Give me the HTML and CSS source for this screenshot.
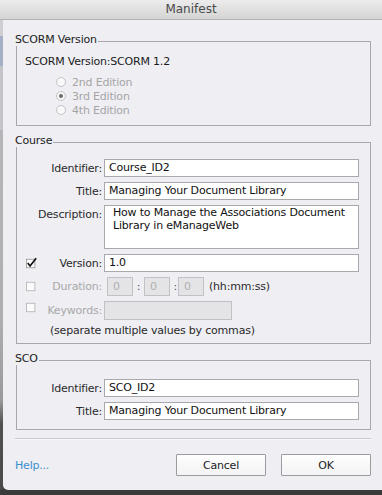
FILE: index.html
```html
<!DOCTYPE html>
<html>
<head>
<meta charset="utf-8">
<title>Manifest</title>
<link rel="stylesheet" href="styles.css">
</head>
<body>
<div class="window">
  <div class="titlebar">Manifest</div>
  <div class="main">
    <div class="strip"></div>
    <div class="dialog">
      <section class="group">
        <div class="group-head"><span class="group-title">SCORM Version</span><span class="group-rule"></span></div>
        <div class="group-body scorm-body">
          <div class="scorm-line">SCORM Version:SCORM 1.2</div>
          <div class="radios">
            <div class="radio-row"><span class="radio"></span>2nd Edition</div>
            <div class="radio-row"><span class="radio on"></span>3rd Edition</div>
            <div class="radio-row"><span class="radio"></span>4th Edition</div>
          </div>
        </div>
      </section>

      <section class="group gap">
        <div class="group-head"><span class="group-title">Course</span><span class="group-rule"></span></div>
        <div class="group-body course-body">
          <label class="lbl wide">Identifier:</label>
          <div class="field">Course_ID2</div>

          <label class="lbl wide">Title:</label>
          <div class="field">Managing Your Document Library</div>

          <label class="lbl wide top">Description:</label>
          <div class="field area">How to Manage the Associations Document Library in eManageWeb</div>

          <span class="check checked"><svg width="13" height="13" viewBox="0 0 13 13"><rect x="0.5" y="1.5" width="10" height="10" fill="#fbfbfb" stroke="#9a9a9a"/><path d="M2 6 L4.8 9.4 L12 0.4" fill="none" stroke="#111" stroke-width="2"/></svg></span>
          <label class="lbl">Version:</label>
          <div class="field">1.0</div>

          <span class="check"><svg width="13" height="13" viewBox="0 0 13 13"><rect x="0.5" y="1.5" width="10" height="10" fill="#fbfbfb" stroke="#b4b4b8"/></svg></span>
          <label class="lbl dim">Duration:</label>
          <div class="duration">
            <span class="mini">0</span><span class="colon c1">:</span><span class="mini">0</span><span class="colon c2">:</span><span class="mini">0</span><span class="fmt">(hh:mm:ss)</span>
          </div>

          <span class="check kw"><svg width="13" height="13" viewBox="0 0 13 13"><rect x="0.5" y="1.5" width="10" height="10" fill="#fbfbfb" stroke="#b4b4b8"/></svg></span>
          <label class="lbl dim">Keywords:</label>
          <div class="kwrow"><span class="field disabled kwfield"></span></div>

          <div class="hint">(separate multiple values by commas)</div>
        </div>
      </section>

      <section class="group gap">
        <div class="group-head"><span class="group-title">SCO</span><span class="group-rule"></span></div>
        <div class="group-body sco-body">
          <label class="lbl wide">Identifier:</label>
          <div class="field">SCO_ID2</div>

          <label class="lbl wide">Title:</label>
          <div class="field">Managing Your Document Library</div>
        </div>
      </section>

      <div class="separator"></div>

      <div class="footer">
        <a class="help">Help...</a>
        <div class="buttons">
          <button class="btn">Cancel</button>
          <button class="btn">OK</button>
        </div>
      </div>
    </div>
  </div>
</div>
</body>
</html>
```

FILE: styles.css
```css
* { box-sizing: border-box; }

html, body {
  margin: 0;
  padding: 0;
}

body {
  font-family: "DejaVu Sans", "Liberation Sans", sans-serif;
  font-size: 11px;
  letter-spacing: -0.2px;
  color: #222;
  background: #3a3a3a;
}

.window {
  width: 382px;
  height: 495px;
  background: #3a3a3a;
  overflow: hidden;
}

.titlebar {
  height: 20px;
  line-height: 19px;
  text-align: center;
  font-size: 12px;
  letter-spacing: 0;
  color: #4a4a4a;
  background: linear-gradient(#ececec, #d4d4d4);
  border-bottom: 1px solid #b2b2b2;
}

.main {
  display: flex;
  height: 470px;
}

.strip {
  width: 3px;
  background: linear-gradient(to bottom,
    #cfcfd3 0, #cfcfd3 16px,
    #a4aec4 16px, #a4aec4 46px,
    #c4c4c8 46px, #c4c4c8 110px,
    #b6b6b8 110px, #aeaeb0 300px,
    #9a9a9c 380px, #505050 404px, #4a4a4a 470px);
}

.dialog {
  flex: 1;
  background: #eeeef3;
  border-bottom-left-radius: 5px;
  padding: 14px 11px 0 12px;
}

/* group boxes */
.group.gap { margin-top: 9px; }

.group-head {
  display: flex;
  height: 12px;
  line-height: 12px;
}

.group-title {
  color: #1c1c1c;
  padding-right: 1px;
}

.group-rule {
  flex: 1;
  margin-top: 7px;
  border-top: 1px solid #a7a7ac;
  border-right: 1px solid #a7a7ac;
}

.group-body {
  margin-left: 1px;
  border: 1px solid #a7a7ac;
  border-top: none;
}

/* SCORM version */
.scorm-body {
  padding: 9px 0 8px 8px;
}

.scorm-line {
  line-height: 14px;
  color: #1c1c1c;
}

.radios {
  margin-top: 6px;
  padding-left: 31px;
}

.radio-row {
  display: flex;
  align-items: center;
  height: 14px;
  color: #a6a6a6;
}

.radio {
  width: 10px;
  height: 10px;
  border-radius: 50%;
  border: 1px solid #c3c3c6;
  background: #f9f9fa;
  margin-right: 6px;
  display: flex;
  align-items: center;
  justify-content: center;
}

.radio.on::after {
  content: "";
  width: 4px;
  height: 4px;
  border-radius: 50%;
  background: #6a6a6a;
}

/* Course form */
.course-body,
.sco-body {
  display: grid;
  grid-template-columns: 11px 67px 255px;
  column-gap: 0;
  row-gap: 5px;
  padding: 12px 0 5px 9px;
  align-items: center;
}

.sco-body {
  padding: 14px 0 9px 9px;
}

.lbl {
  text-align: right;
  padding-right: 2px;
  color: #2a2a2a;
  white-space: nowrap;
}

.lbl.wide { grid-column: 1 / 3; }
.lbl.top { align-self: start; padding-top: 3px; }
.lbl.dim { color: #a9a9a9; }

.field {
  height: 18px;
  line-height: 16px;
  border: 1px solid #a9a9ad;
  background: #fff;
  padding: 0 4px;
  color: #111;
  white-space: nowrap;
  overflow: hidden;
}

.field.area {
  height: 44px;
  line-height: 13px;
  padding: 0 6px 0 8px;
  white-space: normal;
}

.field.disabled {
  background: #e4e4e6;
  border-color: #c0c0c4;
}

.check {
  display: flex;
  align-items: center;
  height: 13px;
}

.check svg { display: block; }

.check.kw { align-self: start; margin-top: 0; }

.duration {
  display: flex;
  align-items: center;
  height: 19px;
  padding-left: 3px;
}

.mini {
  width: 26px;
  height: 19px;
  line-height: 17px;
  border: 1px solid #c2c2c6;
  background: #e4e4e6;
  color: #b0b0b0;
  padding-left: 5px;
}

.colon {
  color: #555;
  text-align: center;
}

.colon.c1 { width: 11px; }
.colon.c2 { width: 8px; text-align: right; padding-right: 1px; }

.fmt {
  margin-left: 5px;
  color: #2a2a2a;
}

.kwrow { display: flex; }

.kwfield {
  display: block;
  width: 128px;
  height: 19px;
}

.hint {
  grid-column: 2 / 4;
  padding-left: 13px;
  line-height: 14px;
  margin-top: -1px;
  color: #2a2a2a;
}

/* footer */
.separator {
  margin-top: 8px;
  height: 2px;
  border-top: 1px solid #c9c9ce;
  border-bottom: 1px solid #f7f7fa;
}

.footer {
  display: flex;
  justify-content: space-between;
  align-items: center;
  margin-top: 14px;
}

.help {
  color: #3c8fce;
  cursor: pointer;
}

.buttons {
  display: flex;
  gap: 15px;
}

.btn {
  width: 90px;
  height: 22px;
  font-family: "DejaVu Sans", "Liberation Sans", sans-serif;
  font-size: 11px;
  letter-spacing: -0.2px;
  color: #1c1c1c;
  background: linear-gradient(#fefefe, #f3f3f5);
  border: 1px solid #9c9ca0;
  border-radius: 1px;
  padding: 0;
}
```
